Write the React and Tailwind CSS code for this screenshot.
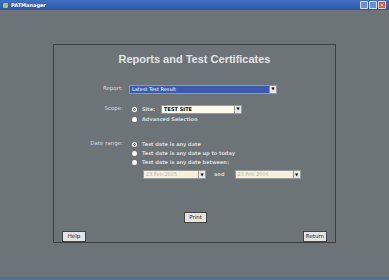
import React from 'react';

const Radio = ({ checked }) => (
  <span className="w-[5px] h-[5px] rounded-full bg-white flex items-center justify-center shrink-0">
    {checked && <span className="w-[3px] h-[3px] rounded-full border border-[#555]" />}
  </span>
);

const Select = ({ value, className, textClass }) => (
  <div className={`flex items-center border border-[#999] ${className}`}>
    <span className={`flex-1 pl-[2px] text-[5px] leading-none truncate ${textClass}`}>{value}</span>
    <span className="w-[7px] h-full bg-[#e8e8e8] border-l border-[#999] flex items-center justify-center text-[4px] text-black leading-none">▼</span>
  </div>
);

const Button = ({ children, className }) => (
  <div className={`h-[11px] bg-[#e4e4e4] border border-[#444] flex items-center justify-center text-[5.5px] text-[#222] leading-none ${className}`}>
    {children}
  </div>
);

const opt = 'ml-[5px] text-[5px] font-bold text-[#d8dadb] leading-none';

export default function App() {
  return (
    <div className="w-[389px] h-[280px] bg-[#6c7477] flex flex-col overflow-hidden" style={{ fontFamily: '"DejaVu Sans", sans-serif' }}>
      <div className="h-[10px] bg-gradient-to-b from-[#3f6fc4] to-[#2a55a8] flex items-center px-[3px] shrink-0">
        <span className="w-[5px] h-[5px] bg-[#b9c04a] rounded-[1px] mr-[3px]" />
        <span className="text-[5px] text-white font-bold leading-none">PATManager</span>
        <div className="ml-auto flex gap-[1px]">
          <span className="w-[8px] h-[8px] bg-[#6b8fd6] border border-white/70 rounded-[1px]" />
          <span className="w-[8px] h-[8px] bg-[#6b8fd6] border border-white/70 rounded-[1px]" />
          <span className="w-[8px] h-[8px] bg-[#d9582f] border border-white/70 rounded-[1px] text-white text-[6px] leading-none flex items-center justify-center">×</span>
        </div>
      </div>

      <div className="flex-1">
        <div className="mt-[34px] ml-[53px] w-[283px] h-[199px] border border-[#3b4043] flex flex-col relative">
          <div className="mt-[6px] text-center text-[11px] font-bold text-[#e2e4e4]" style={{ fontFamily: '"Liberation Sans", sans-serif' }}>Reports and Test Certificates</div>

          <div className="mt-[17px] flex items-center h-[9px]">
            <span className="w-[69px] text-right text-[5.5px] text-[#d8dadb] leading-none">Report:</span>
            <Select value="Latest Test Result" className="ml-[6px] w-[148px] h-[9px] bg-[#3b5cae]" textClass="text-white" />
          </div>

          <div className="mt-[11px] flex items-center h-[9px]">
            <span className="w-[69px] text-right text-[5.5px] text-[#d8dadb] leading-none">Scope:</span>
            <span className="ml-[9px]"><Radio checked /></span>
            <span className={opt}>Site:</span>
            <Select value="TEST SITE" className="ml-[6px] w-[81px] h-[9px] bg-[#fffbea]" textClass="text-black font-bold" />
          </div>
          <div className="mt-[3px] flex items-center h-[7px]">
            <span className="ml-[78px]"><Radio /></span>
            <span className={opt}>Advanced Selection</span>
          </div>

          <div className="mt-[18px] flex items-center h-[7px]">
            <span className="w-[69px] text-right text-[5.5px] text-[#d8dadb] leading-none">Date range:</span>
            <span className="ml-[9px]"><Radio checked /></span>
            <span className={opt}>Test date is any date</span>
          </div>
          <div className="mt-[3px] flex items-center h-[7px]">
            <span className="ml-[78px]"><Radio /></span>
            <span className={opt}>Test date is any date up to today</span>
          </div>
          <div className="mt-[3px] flex items-center h-[7px]">
            <span className="ml-[78px]"><Radio /></span>
            <span className={opt}>Test date is any date between:</span>
          </div>
          <div className="mt-[4px] flex items-center h-[9px]">
            <Select value="23 Feb 2005" className="ml-[89px] w-[63px] h-[9px] bg-[#f5f1dc]" textClass="text-[#b8b4a4]" />
            <span className="ml-[8px] text-[5px] font-bold text-[#d8dadb] leading-none">and</span>
            <Select value="23 Feb 2006" className="ml-[10px] w-[66px] h-[9px] bg-[#f5f1dc]" textClass="text-[#b8b4a4]" />
          </div>

          <div className="mt-[33px] flex">
            <Button className="ml-[130px] w-[23px]">Print</Button>
          </div>
          <div className="mt-[8px] flex justify-between px-[8px]">
            <Button className="w-[24px]">Help</Button>
            <Button className="w-[24px]">Return</Button>
          </div>
        </div>
      </div>

      <div className="h-[3px] bg-[#4d7399] shrink-0" />
    </div>
  );
}
